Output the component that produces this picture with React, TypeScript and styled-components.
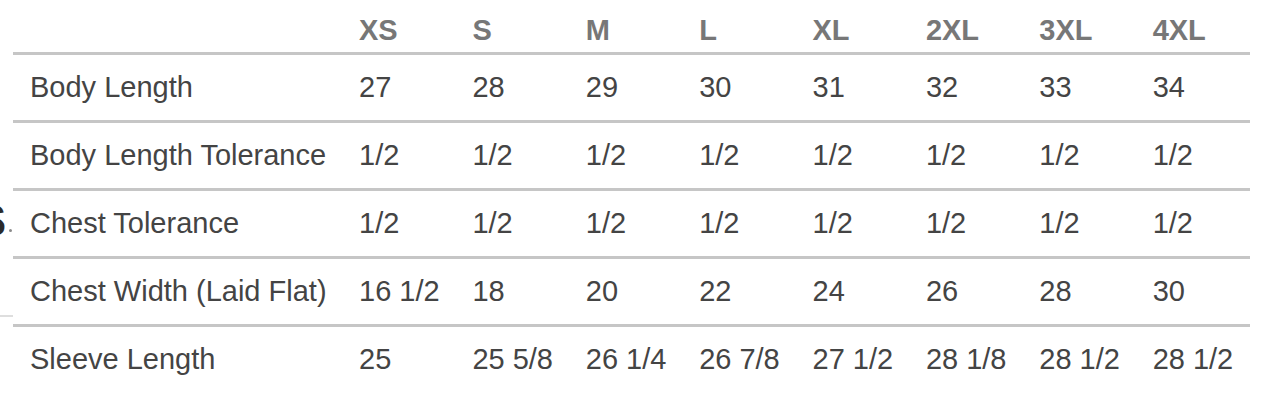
import React from "react";
import styled, { createGlobalStyle } from "styled-components";

const sizes = ["XS", "S", "M", "L", "XL", "2XL", "3XL", "4XL"];

const rows: { label: string; values: string[] }[] = [
  { label: "Body Length", values: ["27", "28", "29", "30", "31", "32", "33", "34"] },
  { label: "Body Length Tolerance", values: Array(8).fill("1/2") },
  { label: "Chest Tolerance", values: Array(8).fill("1/2") },
  {
    label: "Chest Width (Laid Flat)",
    values: ["16 1/2", "18", "20", "22", "24", "26", "28", "30"],
  },
  {
    label: "Sleeve Length",
    values: ["25", "25 5/8", "26 1/4", "26 7/8", "27 1/2", "28 1/8", "28 1/2", "28 1/2"],
  },
];

const App = () => {
  return (
    <>
      <GlobalStyle />
      <Page>
        <Gutter>
          <LogoRow>
            <span>S</span>
            <Reg />
          </LogoRow>
          <StubLine />
        </Gutter>
        <Chart>
          <HeadRow>
            <LabelCell />
            {sizes.map((s) => (
              <HeadCell key={s}>{s}</HeadCell>
            ))}
          </HeadRow>
          {rows.map((row, i) => (
            <Row key={row.label} $last={i === rows.length - 1}>
              <LabelCell>{row.label}</LabelCell>
              {row.values.map((v, j) => (
                <Cell key={j}>{v}</Cell>
              ))}
            </Row>
          ))}
        </Chart>
      </Page>
    </>
  );
};

export default App;

const GlobalStyle = createGlobalStyle`
  html, body {
    margin: 0;
    padding: 0;
    background: #fff;
  }
  body {
    font-family: "Liberation Sans", Arial, Helvetica, sans-serif;
  }
`;

const Page = styled.div`
  display: flex;
  width: 1266px;
  height: 414px;
  overflow: hidden;
`;

const Gutter = styled.div`
  display: flex;
  flex-direction: column;
  width: 13px;
  flex-shrink: 0;
  overflow: hidden;
`;

const LogoRow = styled.div`
  display: flex;
  justify-content: flex-end;
  align-items: flex-end;
  margin-top: 200px;
  height: 42px;
  padding-right: 1px;
  font-size: 44px;
  line-height: 42px;
  font-weight: 700;
  color: #2b2b2b;
  white-space: nowrap;
`;

const Reg = styled.span`
  width: 3px;
  height: 3px;
  margin: 0 0 10px 3px;
  border-radius: 50%;
  background: #8a8a8a;
  flex-shrink: 0;
`;

const StubLine = styled.div`
  margin-top: 73px;
  height: 2px;
  background: #dedede;
`;

const Chart = styled.div`
  display: flex;
  flex-direction: column;
  width: 1237px;
`;

const HeadRow = styled.div`
  display: grid;
  grid-template-columns: 330px repeat(8, 1fr);
  height: 52px;
  align-items: end;
  border-bottom: 3px solid #c6c6c6;
`;

const Row = styled.div<{ $last?: boolean }>`
  display: grid;
  grid-template-columns: 330px repeat(8, 1fr);
  height: 65px;
  align-items: center;
  border-bottom: ${(p) => (p.$last ? "none" : "3px solid #c6c6c6")};
`;

const Cell = styled.div`
  padding-left: 16px;
  font-size: 29px;
  line-height: 33px;
  color: #444;
  white-space: nowrap;
`;

const LabelCell = styled(Cell)`
  padding-left: 17px;
`;

const HeadCell = styled(Cell)`
  font-weight: 700;
  color: #777;
  padding-bottom: 5px;
`;
